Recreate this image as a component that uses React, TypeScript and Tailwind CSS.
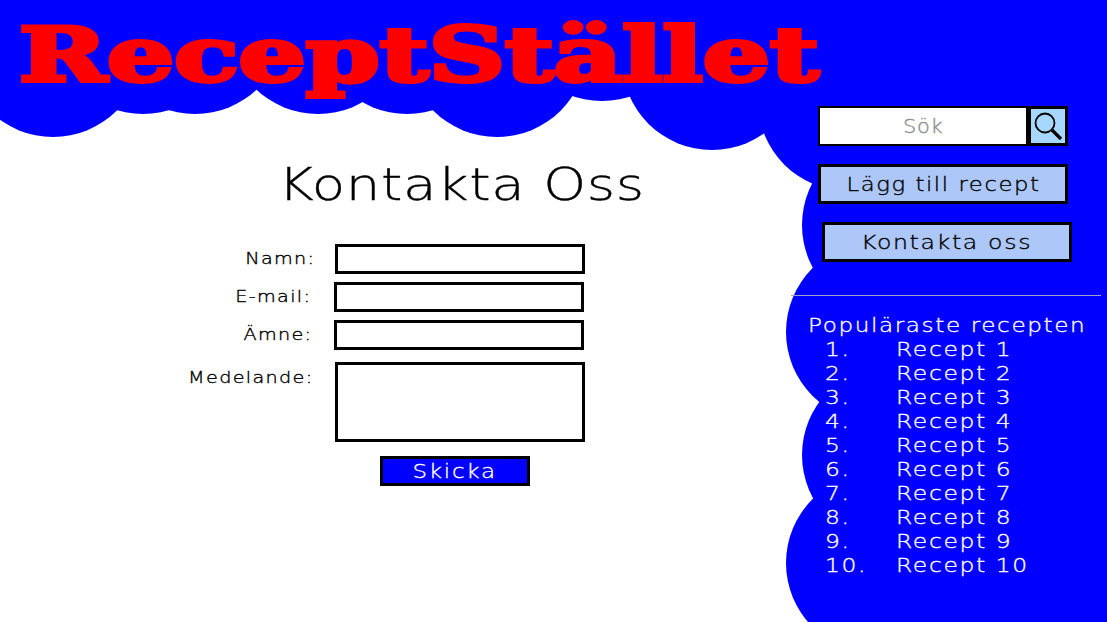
const circles: [number, number][] = [
  [53, 47], [143, 24], [195, 24], [318, 24], [407, 24], [497, 47], [602, 11], [712, 60],
  [848, 101], [892, 225], [876, 332], [892, 455], [876, 563],
];

const font = "[font-family:'DejaVu_Sans',sans-serif] font-extralight [-webkit-text-stroke:0.35px]";

function Field({ label, labelW, ml, mt, top = false, h = "h-[30px]" }: { label: string; labelW: string; ml: string; mt: string; top?: boolean; h?: string }) {
  return (
    <div className={`flex ${top ? "items-start" : "items-center"} ${mt}`}>
      <label className={`${labelW} shrink-0 text-right text-[16px] leading-[20px] tracking-[1.1px] text-black ${top ? "pt-[6px]" : ""}`}>
        <span className="inline-block origin-right scale-x-[1.2]">{label}</span>
      </label>
      <div className={`${ml} w-[250px] ${h} border-[3px] border-black bg-white`} />
    </div>
  );
}

export default function App() {
  const recipes = Array.from({ length: 10 }, (_, i) => i + 1);
  return (
    <div className={`relative h-[622px] w-full overflow-hidden bg-white ${font}`}>
      <svg className="absolute inset-0" width="1107" height="622" viewBox="0 0 1107 622" aria-hidden="true">
        <g fill="#0000ff">
          <rect x="0" y="0" width="1107" height="40" />
          <rect x="860" y="0" width="247" height="622" />
          {circles.map(([cx, cy]) => (
            <circle key={`${cx}-${cy}`} cx={cx} cy={cy} r="90" />
          ))}
        </g>
      </svg>

      <div className="relative flex h-full flex-col">
        <header className="h-[106px] shrink-0 pl-[19px] pt-[12px]">
          <h1 className="inline-block origin-left scale-x-[1.41] whitespace-nowrap text-[75px] leading-[86px] font-bold text-[#ff0000] [font-family:'DejaVu_Serif',serif] [-webkit-text-stroke:4px_#ff0000]">
            ReceptStället
          </h1>
        </header>

        <div className="flex min-h-0 flex-1">
          <main className="w-[791px] shrink-0">
            <h2 className="ml-[278px] mt-[49px] whitespace-nowrap text-[44px] leading-[60px] font-extralight tracking-[0.5px] text-black">
              <span className="inline-block origin-left scale-x-[1.24]">Kontakta Oss</span>
            </h2>
            <form className="mt-[29px]">
              <Field label="Namn:" labelW="w-[315px]" ml="ml-[20px]" mt="mt-0" />
              <Field label="E-mail:" labelW="w-[311px]" ml="ml-[23px]" mt="mt-[8px]" />
              <Field label="Ämne:" labelW="w-[312px]" ml="ml-[22px]" mt="mt-[8px]" />
              <Field label="Medelande:" labelW="w-[313px]" ml="ml-[22px]" mt="mt-[12px]" top h="h-[80px]" />
              <button type="button" className="ml-[380px] mt-[14px] block h-[30px] w-[150px] border-[3px] border-black bg-[#0000ff] text-[20px] leading-[24px] tracking-[1.5px] text-white">
                <span className="inline-block scale-x-[1.15]">Skicka</span>
              </button>
            </form>
          </main>

          <aside className="min-w-0 flex-1 text-[20px] leading-[24px] tracking-[1.4px]">
            <div className="ml-[27px] flex h-[40px] w-[250px]">
              <div className="flex w-[210px] items-center justify-center border-2 border-black bg-white text-[#8c8c8c]">
                <span className="inline-block scale-x-[1.05] tracking-[0.6px]">Sök</span>
              </div>
              <button type="button" aria-label="Sök" className="flex w-[40px] items-center justify-center border-[3px] border-black bg-[#a6d8ff]">
                <svg width="32" height="32" viewBox="0 0 32 32" fill="none" stroke="#000">
                  <circle cx="13" cy="13" r="9.5" strokeWidth="1.8" />
                  <path d="M20 20l9 9" strokeWidth="3.2" />
                </svg>
              </button>
            </div>
            <button type="button" className="ml-[27px] mt-[18px] block h-[40px] w-[250px] border-[3px] border-black bg-[#adc7f8] text-black">
              <span className="inline-block scale-x-[1.135]">Lägg till recept</span>
            </button>
            <button type="button" className="ml-[31px] mt-[18px] block h-[40px] w-[250px] border-[3px] border-black bg-[#adc7f8] text-black">
              <span className="inline-block scale-x-[1.18]">Kontakta oss</span>
            </button>
            <hr className="mt-[33px] ml-0 w-[310px] border-t border-[#a0a0c8]" />
            <div className="ml-[17px] mt-[17px] text-white">
              <h3 className="font-extralight">
                <span className="inline-block origin-left scale-x-[1.154]">Populäraste recepten</span>
              </h3>
              <ol>
                {recipes.map((n) => (
                  <li key={n} className="flex">
                    <span className="ml-[17px] w-[71px] shrink-0">
                      <span className="inline-block origin-left scale-x-[1.17]">{n}.</span>
                    </span>
                    <span className="inline-block origin-left scale-x-[1.17]">Recept {n}</span>
                  </li>
                ))}
              </ol>
            </div>
          </aside>
        </div>
      </div>
    </div>
  );
}
